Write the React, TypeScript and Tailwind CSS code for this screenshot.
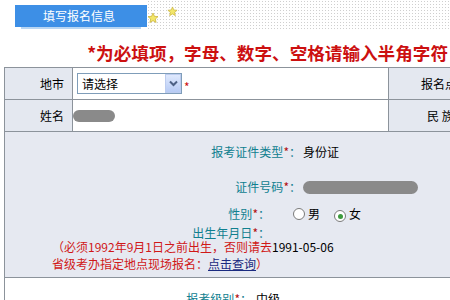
import React from "react";

function Star({ size }: { size: number }) {
  return (
    <svg width={size} height={size} viewBox="0 0 24 24">
      <path
        d="M12 2 L14.9 8.6 L22 9.3 L16.6 14 L18.2 21 L12 17.3 L5.8 21 L7.4 14 L2 9.3 L9.1 8.6 Z"
        fill="#f2e66a"
        stroke="#c9b23a"
        strokeWidth="1.5"
        strokeLinejoin="round"
      />
    </svg>
  );
}

function Radio({ checked }: { checked?: boolean }) {
  return (
    <span className="inline-flex items-center justify-center w-[12px] h-[12px] rounded-full border border-[#7a7a7a] bg-white">
      {checked && <span className="w-[5px] h-[5px] rounded-full bg-[#3d9a3d]" />}
    </span>
  );
}

export default function App() {
  const teal = "text-[#10808f]";
  return (
    <div className="w-[450px] h-[300px] overflow-hidden bg-white font-['Noto_Sans_CJK_SC',sans-serif] text-[12px] text-black">
      {/* header */}
      <div className="flex h-[30px]">
        <div className="w-[15px]" />
        <div className="flex flex-col w-[132px]">
          <div className="mt-[5px] h-[22px] bg-[#3d8fe6] flex items-center pl-[28px] text-white text-[12px] leading-[22px]">
            填写报名信息
          </div>
          <div className="h-[2px] bg-[#b9d6f3] mx-[6px]" />
        </div>
        <div className="relative flex-1 h-[29px] bg-[radial-gradient(circle,#cfcfcf_0.7px,transparent_1px)] bg-[length:3px_3px]">
          <div className="absolute left-[0px] top-[12px]">
            <Star size={12} />
          </div>
          <div className="absolute left-[20px] top-[6px]">
            <Star size={11} />
          </div>
        </div>
      </div>

      {/* notice */}
      <div className="h-[37px] flex items-center justify-end pr-[2px] pt-[8px]">
        <span className="text-[17.6px] font-bold text-[#cc1010] leading-none whitespace-nowrap">
          *为必填项，字母、数字、空格请输入半角字符
        </span>
      </div>

      {/* table */}
      <div className="ml-[4px] border-t border-l border-[#8c939b]">
        <div className="flex h-[32px] border-b border-[#8c939b]">
          <div className="w-[68px] shrink-0 bg-[#e4e8f0] border-r border-[#8c939b] flex items-center justify-end pr-[8px]">
            地市
          </div>
          <div className="w-[316px] shrink-0 bg-white border-r border-[#8c939b] flex items-center pl-[4px]">
            <div className="w-[105px] h-[21px] border border-[#7f9db9] bg-white flex items-center">
              <span className="flex-1 pl-[4px] leading-[19px]">请选择</span>
              <span className="w-[16px] h-[19px] mr-[0px] bg-gradient-to-b from-[#dfe9fd] to-[#b7cbf5] border border-[#bcccef] flex items-center justify-center">
                <svg width="9" height="7" viewBox="0 0 9 7">
                  <path d="M1 1.5 L4.5 5 L8 1.5" fill="none" stroke="#4d6185" strokeWidth="2" />
                </svg>
              </span>
            </div>
            <span className="text-[#cc1010] ml-[2px] mt-[6px] text-[12px]">*</span>
          </div>
          <div className="flex-1 bg-[#e4e8f0] flex items-center pl-[32px] whitespace-nowrap overflow-hidden">
            报名点
          </div>
        </div>

        <div className="flex h-[32px] border-b border-[#8c939b]">
          <div className="w-[68px] shrink-0 bg-[#e4e8f0] border-r border-[#8c939b] flex items-center justify-end pr-[8px]">
            姓名
          </div>
          <div className="w-[316px] shrink-0 bg-white border-r border-[#8c939b] flex items-center">
            <div className="w-[42px] h-[12px] rounded-full bg-[#8a8a8a] blur-[0.6px]" />
          </div>
          <div className="flex-1 bg-[#e4e8f0] flex items-center pl-[38px] whitespace-nowrap overflow-hidden">
            民&nbsp;族
          </div>
        </div>

        <div className="h-[146px] bg-[#e6e9f1] border-b border-[#8c939b] pt-[12px] flex flex-col">
          <div className="flex h-[16px] items-center leading-[16px]">
            <div className={`w-[296px] text-right ${teal}`}>
              报考证件类型<span className="text-[#b01010]">*</span>：
            </div>
            <div className="ml-[2px]">身份证</div>
          </div>

          <div className="flex h-[16px] items-center leading-[16px] mt-[19px]">
            <div className={`w-[296px] text-right ${teal}`}>
              证件号码<span className="text-[#b01010]">*</span>：
            </div>
            <div className="ml-[2px] w-[115px] h-[13px] rounded-full bg-[#8a8a8a] blur-[0.6px]" />
          </div>

          <div className="flex h-[16px] items-center leading-[16px] mt-[11px]">
            <div className={`w-[265px] text-right ${teal}`}>
              性别<span className="text-[#b01010]">*</span>：
            </div>
            <div className="flex items-center ml-[23px]">
              <Radio />
              <span className="ml-[3px]">男</span>
              <span className="ml-[14px]">
                <Radio checked />
              </span>
              <span className="ml-[3px]">女</span>
            </div>
          </div>

          <div className="flex h-[11px] items-center leading-[11px] mt-[5px]">
            <div className={`w-[265px] text-right ${teal}`}>
              出生年月日<span className="text-[#b01010]">*</span>：
            </div>
          </div>

          <div className="pl-[47px] leading-[17px] text-[#d01818] whitespace-nowrap">
            <div>
              （必须1992年9月1日之前出生，否则请去
              <span className="text-black">1991-05-06</span>
            </div>
            <div>
              省级考办指定地点现场报名：
              <span className="text-[#1a2a80] underline">点击查询</span>）
            </div>
          </div>
        </div>

        <div className="h-[40px] bg-white pt-[13px] flex">
          <div className={`w-[247px] text-right ${teal} leading-[16px]`}>
            报考级别<span className="text-[#b01010]">*</span>：
          </div>
          <div className="ml-[4px] leading-[16px]">中级</div>
        </div>
      </div>
    </div>
  );
}
